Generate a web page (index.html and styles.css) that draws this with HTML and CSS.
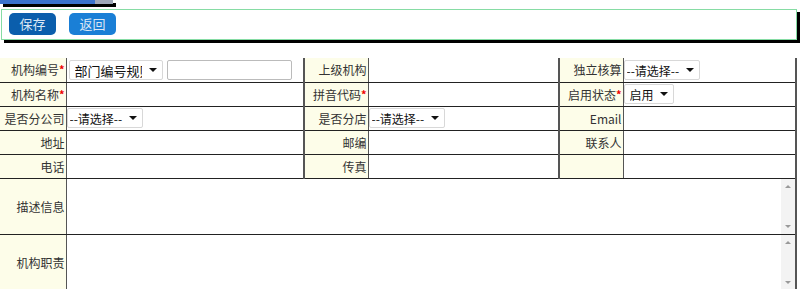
FILE: index.html
```html
<!DOCTYPE html>
<html lang="zh-CN">
<head>
    <meta charset="UTF-8">
    <meta name="viewport" content="width=device-width, initial-scale=1.0">
    <title>机构信息</title>
    <link rel="stylesheet" href="styles.css">
</head>
<body>
    <div class="progress"><div class="progress-fill"></div></div>
    <div class="toolbar">
        <button class="btn btn-save">保存</button>
        <button class="btn btn-back">返回</button>
    </div>
    <table class="form">
        <colgroup>
            <col class="c-label1">
            <col class="c-value1">
            <col class="c-label">
            <col class="c-value2">
            <col class="c-label">
            <col>
        </colgroup>
        <tr class="row">
            <th>机构编号<i>*</i></th>
            <td class="value"><span class="sel sel-rule"><select><option>部门编号规则</option></select></span><input class="txt" type="text"></td>
            <th>上级机构</th>
            <td class="value"></td>
            <th>独立核算</th>
            <td class="value"><span class="sel"><select><option>--请选择--</option></select></span></td>
        </tr>
        <tr class="row">
            <th>机构名称<i>*</i></th>
            <td class="value"></td>
            <th>拼音代码<i>*</i></th>
            <td class="value"></td>
            <th>启用状态<i>*</i></th>
            <td class="value"><span class="sel sel-short"><select><option>启用</option></select></span></td>
        </tr>
        <tr class="row">
            <th>是否分公司</th>
            <td class="value"><span class="sel"><select><option>--请选择--</option></select></span></td>
            <th>是否分店</th>
            <td class="value"><span class="sel"><select><option>--请选择--</option></select></span></td>
            <th>Email</th>
            <td class="value"></td>
        </tr>
        <tr class="row">
            <th>地址</th>
            <td class="value"></td>
            <th>邮编</th>
            <td class="value"></td>
            <th>联系人</th>
            <td class="value"></td>
        </tr>
        <tr class="row">
            <th>电话</th>
            <td class="value"></td>
            <th>传真</th>
            <td class="value"></td>
            <th></th>
            <td class="value"></td>
        </tr>
        <tr class="row-area">
            <th>描述信息</th>
            <td class="value" colspan="5">
                <div class="area">
                    <textarea></textarea>
                    <div class="scroll"><span class="up"></span><span class="down"></span></div>
                </div>
            </td>
        </tr>
        <tr class="row-area">
            <th>机构职责</th>
            <td class="value" colspan="5">
                <div class="area">
                    <textarea></textarea>
                    <div class="scroll"><span class="up"></span><span class="down"></span></div>
                </div>
            </td>
        </tr>
    </table>
</body>
</html>
```

FILE: styles.css
```css
body {
    margin: 0;
    font-family: "Noto Sans CJK SC", "Liberation Sans", sans-serif;
    font-size: 12px;
    color: #333;
    background: #fff;
}
.progress {
    width: 113px;
    height: 4px;
    background-color: #9ea6b8;
    box-shadow: 3px 3px 0 #000;
}
.progress-fill {
    width: 95px;
    height: 4px;
    background-color: #3a72cc;
}
.toolbar {
    display: flex;
    gap: 13px;
    box-sizing: border-box;
    width: 796px;
    height: 31px;
    margin: 5px 0 0 1px;
    padding: 3px 7px;
    border: 1px solid #86dca4;
    box-shadow: 3px 3px 0 #000;
}
.btn {
    width: 47px;
    height: 22px;
    padding: 0;
    border: 0;
    border-radius: 5px;
    color: #dce7f5;
    font-family: inherit;
    font-size: 13px;
    line-height: 22px;
}
.btn-save {
    background-color: #0b5eac;
}
.btn-back {
    background-color: #1a7fd6;
}
.form {
    width: 797px;
    margin-top: 18px;
    border-collapse: collapse;
    table-layout: fixed;
}
.c-label1 {
    width: 66px;
}
.c-value1 {
    width: 238px;
}
.c-label {
    width: 64px;
}
.c-value2 {
    width: 191px;
}
.form th {
    padding: 0 1px 0 0;
    background-color: #fdfde9;
    font-weight: normal;
    text-align: right;
    white-space: nowrap;
    border-bottom: 1px solid #222;
    border-right: 1px solid #555;
}
.form th i {
    color: #e00;
    font-style: normal;
    font-weight: bold;
    font-size: 11px;
    vertical-align: top;
}
.form .value {
    padding: 1px 0;
    border-bottom: 1px solid #222;
    border-right: 2px solid #555;
}
.row {
    height: 24px;
}
.row-area {
    height: 56px;
}
.row-area .value {
    padding: 0;
}
.sel {
    position: relative;
    display: inline-block;
    vertical-align: middle;
}
.sel::after {
    content: "";
    position: absolute;
    top: 8px;
    right: 6px;
    border-left: 4px solid transparent;
    border-right: 4px solid transparent;
    border-top: 4px solid #111;
    pointer-events: none;
}
.sel select {
    appearance: none;
    width: 76px;
    height: 20px;
    margin: 0;
    padding: 0 16px 0 2px;
    border: 1px solid #d8d8d8;
    border-radius: 2px;
    background-color: #fff;
    color: #111;
    font-family: inherit;
    font-size: 12px;
}
.sel-rule {
    margin-left: 2px;
}
.sel-rule select {
    width: 94px;
    padding: 0 20px 0 5px;
    font-size: 13px;
}
.sel-short select {
    width: 50px;
    padding-left: 5px;
}
.txt {
    box-sizing: border-box;
    width: 125px;
    height: 20px;
    margin: 0 0 0 4px;
    padding: 0 3px;
    border: 1px solid #bbb;
    border-radius: 2px;
    vertical-align: middle;
}
.area {
    display: flex;
    height: 55px;
}
textarea {
    flex: 1;
    box-sizing: border-box;
    height: 100%;
    margin: 0;
    padding: 2px;
    border: 0;
    resize: none;
    overflow: hidden;
    font-family: inherit;
}
.scroll {
    display: flex;
    flex-direction: column;
    justify-content: space-between;
    align-items: center;
    width: 14px;
    padding: 6px 0;
    box-sizing: border-box;
    background-color: #f3f3f3;
}
.up,
.down {
    width: 0;
    height: 0;
    border-left: 3px solid transparent;
    border-right: 3px solid transparent;
}
.up {
    border-bottom: 3px solid #999;
}
.down {
    border-top: 3px solid #999;
}
```
